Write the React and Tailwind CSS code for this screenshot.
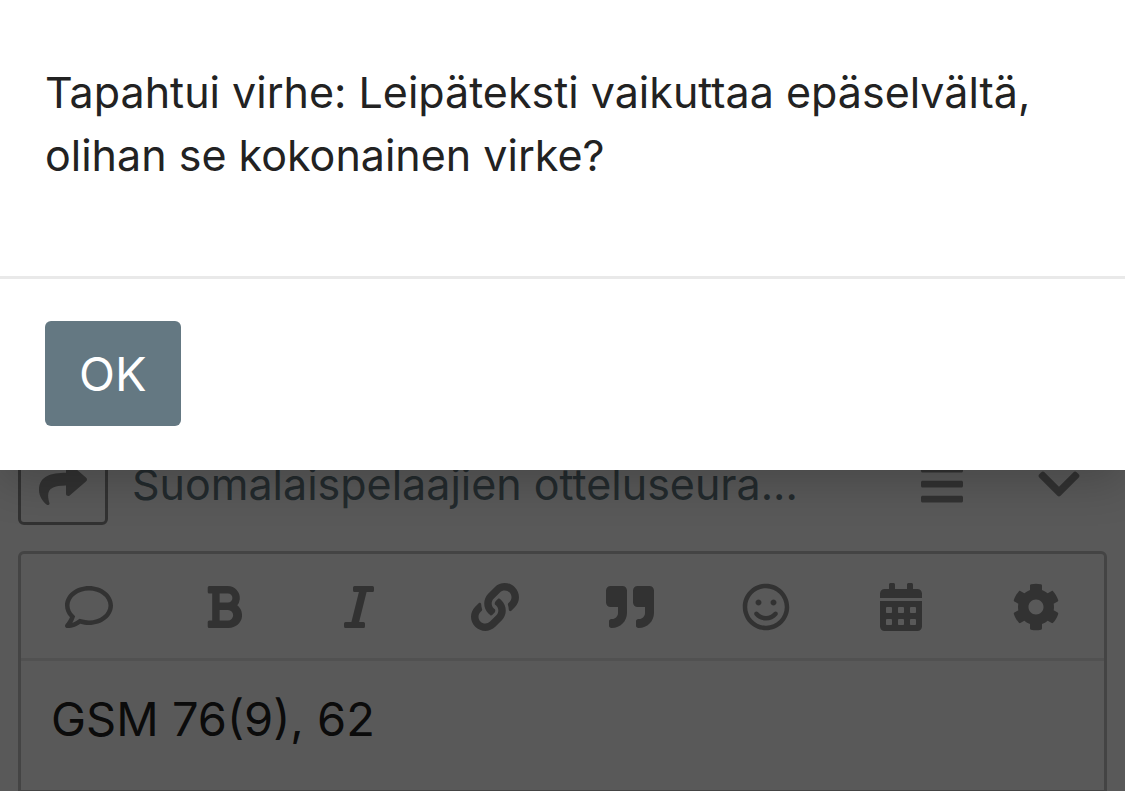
import {
  FaBars,
  FaBold,
  FaCalendarAlt,
  FaChevronDown,
  FaCog,
  FaItalic,
  FaLink,
  FaQuoteRight,
  FaRegComment,
  FaRegSmile,
  FaShare,
} from "react-icons/fa";

const tools = [
  { label: "Lainaa viesti", Icon: FaRegComment },
  { label: "Lihavoitu", Icon: FaBold },
  { label: "Kursivoitu", Icon: FaItalic },
  { label: "Linkki", Icon: FaLink },
  { label: "Lainaus", Icon: FaQuoteRight },
  { label: "Emoji", Icon: FaRegSmile },
  { label: "Päivämäärä", Icon: FaCalendarAlt },
  { label: "Asetukset", Icon: FaCog },
];

function Composer() {
  return (
    <main className="h-full flex flex-col px-[18px] pt-[443px] text-[#919191]">
      <div className="flex items-center mb-[26px] pr-[3px]">
        <button
          type="button"
          aria-label="Vastaa"
          className="shrink-0 w-[90px] h-[82px] border-3 border-[#919191] rounded-md flex items-center justify-center"
        >
          <FaShare className="text-[48px]" />
        </button>
        <a href="#aihe" className="min-w-0 truncate ml-6 text-[43px] leading-[63px] text-[#647882]">
          Suomalaispelaajien otteluseura...
        </a>
        <button type="button" aria-label="Työkalut" className="ml-auto w-[90px] h-[82px] flex items-center justify-center">
          <FaBars className="text-[48px]" />
        </button>
        <button type="button" aria-label="Pienennä" className="ml-[27px] w-[90px] h-[82px] flex items-center justify-center">
          <FaChevronDown className="text-[48px]" />
        </button>
      </div>

      <div className="shrink-0 border-3 border-[#c2c2c2] rounded-t-md">
        <div className="grid grid-cols-8 border-b-3 border-[#e9e9e9]">
          {tools.map(({ label, Icon }) => (
            <button
              key={label}
              type="button"
              aria-label={label}
              className="h-[104px] pt-[2px] flex items-center justify-center"
            >
              <Icon className="text-[48px]" />
            </button>
          ))}
        </div>
        <textarea
          aria-label="Viesti"
          defaultValue="GSM 76(9), 62"
          className="block w-full h-[129px] px-[30px] pt-[25px] text-[47px] leading-[66px] text-[#222222] resize-none outline-none"
        />
      </div>
    </main>
  );
}

function ErrorDialog() {
  return (
    <div
      role="alertdialog"
      aria-modal="true"
      aria-describedby="dialog-message"
      className="absolute inset-x-0 top-0 bg-white text-[#222222] shadow-[0_12px_42px_rgba(0,0,0,0.2)]"
    >
      <div className="px-[45px] pt-[61px] pb-[89px] border-b-3 border-[#e9e9e9]">
        <p id="dialog-message" className="text-[43px] leading-[63px]">
          Tapahtui virhe: Leipäteksti vaikuttaa epäselvältä, olihan se kokonainen virke?
        </p>
      </div>
      <div className="px-[45px] pt-[42px] pb-[44px]">
        <button
          type="button"
          className="block h-[105px] px-[34px] rounded-md bg-[#647882] text-white text-[47px] leading-[66px]"
        >
          OK
        </button>
      </div>
    </div>
  );
}

export default function App() {
  return (
    <div className="relative h-screen overflow-hidden bg-white font-['Inter',sans-serif]">
      <Composer />
      <div className="absolute inset-0 bg-black/65" />
      <ErrorDialog />
    </div>
  );
}
